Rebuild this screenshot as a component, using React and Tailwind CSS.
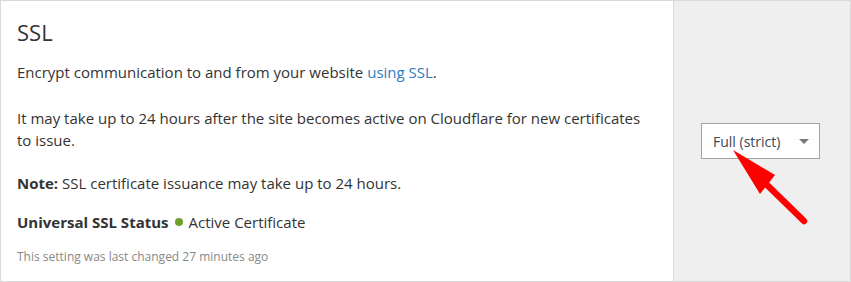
export default function App() {
  return (
    <div className="relative w-[851px] h-[282px] bg-white font-['Open_Sans',sans-serif] text-[#333]">
      <div className="flex h-full border border-[#d9d9d9]">
        {/* setting text */}
        <div className="flex-1 px-4 pt-4">
          <h2 className="text-[22px] leading-[30px] text-[#333]">SSL</h2>
          <p className="mt-[14px] text-[15px] leading-[22px]">
            Encrypt communication to and from your website{" "}
            <a className="text-[#2f7bbf]">using SSL</a>.
          </p>
          <p className="mt-6 text-[15px] leading-[22px]">
            It may take up to 24 hours after the site becomes active on Cloudflare for new certificates to issue.
          </p>
          <p className="mt-[21px] text-[15px] leading-[22px]">
            <strong className="font-bold">Note:</strong> SSL certificate issuance may take up to 24 hours.
          </p>
          <div className="mt-[17px] flex items-center text-[15px] leading-[22px]">
            <span className="font-bold">Universal SSL Status</span>
            <span className="ml-[6px] mr-[6px] w-[8px] h-[8px] rounded-full bg-[#6fa12a]" />
            <span>Active Certificate</span>
          </div>
          <p className="mt-[15px] text-[12px] leading-[18px] text-[#888]">
            This setting was last changed 27 minutes ago
          </p>
        </div>

        {/* control */}
        <div className="w-[177px] border-l border-[#d9d9d9] bg-[#efefef] flex items-center pl-[27px]">
          <div className="w-[119px] h-[36px] border border-[#a3a3a3] bg-white flex items-center justify-between pl-[11px] pr-[10px]">
            <span className="text-[14px] text-[#3c4756]">Full (strict)</span>
            <span className="w-0 h-0 border-l-[5px] border-r-[5px] border-t-[5px] border-l-transparent border-r-transparent border-t-[#777]" />
          </div>
        </div>
      </div>

      {/* annotation arrow */}
      <svg className="absolute inset-0 pointer-events-none" width="851" height="282">
        <line x1="804" y1="221" x2="762" y2="180" stroke="#ff0000" strokeWidth="6.5" strokeLinecap="round" />
        <polygon points="733,150 775,175 760,194" fill="#ff0000" />
      </svg>
    </div>
  );
}
